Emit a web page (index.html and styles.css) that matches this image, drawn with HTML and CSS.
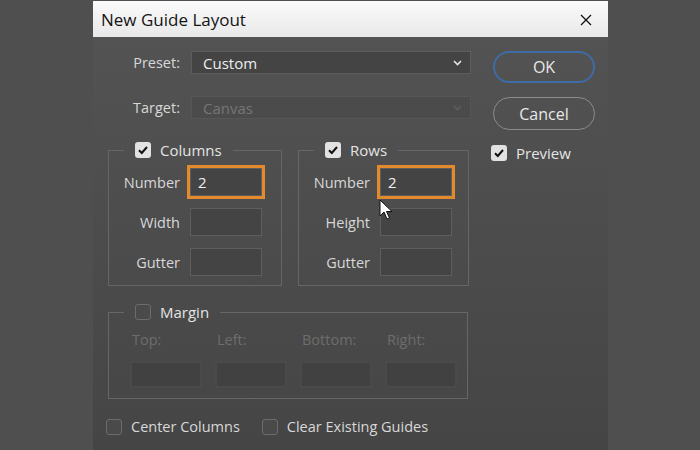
FILE: index.html
```html
<!DOCTYPE html>
<html lang="en">
<head>
    <meta charset="UTF-8">
    <meta name="viewport" content="width=device-width, initial-scale=1.0">
    <title>New Guide Layout</title>
    <link rel="stylesheet" href="styles.css">
</head>
<body>
    <div class="dialog">
        <div class="titlebar">
            <span class="title">New Guide Layout</span>
            <svg class="close" width="12" height="12" viewBox="0 0 12 12">
                <path d="M1 1 L11 11 M11 1 L1 11" stroke="#111" stroke-width="1.3" fill="none"/>
            </svg>
        </div>

        <div class="content">
            <div class="main">
                <div class="field-row">
                    <span class="field-label">Preset:</span>
                    <div class="select">
                        <span>Custom</span>
                        <svg class="chevron" width="9" height="6" viewBox="0 0 9 6">
                            <path d="M1 1 L4.5 4.5 L8 1" stroke="#e6e6e6" stroke-width="1.6" fill="none"/>
                        </svg>
                    </div>
                </div>
                <div class="field-row target">
                    <span class="field-label">Target:</span>
                    <div class="select disabled">
                        <span>Canvas</span>
                        <svg class="chevron" width="9" height="6" viewBox="0 0 9 6">
                            <path d="M1 1 L4.5 4.5 L8 1" stroke="#5e5e5e" stroke-width="1.6" fill="none"/>
                        </svg>
                    </div>
                </div>

                <div class="groups">
                    <fieldset class="group cols">
                        <legend><span class="check on"><svg width="16" height="16" viewBox="0 0 16 16"><path d="M4 8.2 L6.8 11 L12 5" stroke="#111" stroke-width="2" fill="none"/></svg></span>Columns</legend>
                        <div class="grid">
                            <span class="grid-label">Number</span><div class="input focus">2</div>
                            <span class="grid-label">Width</span><div class="input"></div>
                            <span class="grid-label">Gutter</span><div class="input"></div>
                        </div>
                    </fieldset>
                    <fieldset class="group rows">
                        <legend><span class="check on"><svg width="16" height="16" viewBox="0 0 16 16"><path d="M4 8.2 L6.8 11 L12 5" stroke="#111" stroke-width="2" fill="none"/></svg></span>Rows</legend>
                        <div class="grid">
                            <span class="grid-label">Number</span><div class="input focus">2</div>
                            <span class="grid-label">Height</span><div class="input"></div>
                            <span class="grid-label">Gutter</span><div class="input"></div>
                        </div>
                    </fieldset>
                </div>

                <fieldset class="group margin">
                    <legend><span class="check"></span>Margin</legend>
                    <div class="margin-grid">
                        <div class="margin-cell"><span class="dim-label">Top:</span><div class="input off"></div></div>
                        <div class="margin-cell"><span class="dim-label">Left:</span><div class="input off"></div></div>
                        <div class="margin-cell"><span class="dim-label">Bottom:</span><div class="input off"></div></div>
                        <div class="margin-cell"><span class="dim-label">Right:</span><div class="input off"></div></div>
                    </div>
                </fieldset>

                <div class="options">
                    <label class="option"><span class="check"></span>Center Columns</label>
                    <label class="option"><span class="check"></span>Clear Existing Guides</label>
                </div>
            </div>

            <div class="side">
                <button class="btn ok">OK</button>
                <button class="btn">Cancel</button>
                <label class="option preview"><span class="check on"><svg width="16" height="16" viewBox="0 0 16 16"><path d="M4 8.2 L6.8 11 L12 5" stroke="#111" stroke-width="2" fill="none"/></svg></span>Preview</label>
            </div>
        </div>

        <!-- mouse pointer over the rows field -->
        <svg class="pointer" width="14" height="22" viewBox="0 0 14 22">
            <path d="M1 1 L1 17 L5 13 L8 20 L10.5 19 L7.5 12.5 L13 12.5 Z" fill="#fff" stroke="#111" stroke-width="1"/>
        </svg>
    </div>
</body>
</html>
```

FILE: styles.css
```css
body {
    margin: 0;
    background: #4f4f4f;
    font-family: "Open Sans", "Noto Sans", sans-serif;
    font-size: 14.5px;
    color: #d8d8d8;
    overflow: hidden;
}

.dialog {
    position: relative;
    width: 515px;
    height: 450px;
    margin-left: 93px;
    background: linear-gradient(#545454, #454545);
}

/* Title bar */
.titlebar {
    height: 36px;
    margin-top: 1px;
    display: flex;
    align-items: center;
    justify-content: space-between;
    padding: 0 16px 0 8px;
    background: linear-gradient(#fbfbfb, #e8e8e8);
}

.title {
    font-size: 17px;
    color: #141414;
}

.close {
    margin-top: 1px;
}

/* Body */
.content {
    display: flex;
    gap: 20px;
    padding: 14px 0 0 15px;
}

.main {
    width: 363px;
}

.field-row {
    display: flex;
    align-items: center;
    gap: 11px;
}

.field-row.target {
    margin-top: 22px;
}

.field-label {
    width: 72px;
    text-align: right;
}

.select {
    flex: 1;
    height: 21px;
    display: flex;
    align-items: center;
    justify-content: space-between;
    padding: 0 8px 0 11px;
    background: #444;
    border: 1px solid #5c5c5c;
    color: #eee;
    font-size: 15px;
}

.select.disabled {
    background: #4b4b4b;
    border-color: #565656;
    color: #767676;
}

/* Column / row groups */
.groups {
    display: flex;
    gap: 16px;
    margin-top: 21px;
}

.group {
    margin: 0;
    padding: 8px 0 9px 0;
    border: 1px solid #666;
}

.group.cols {
    width: 172px;
}

.group.rows {
    width: 169px;
}

.group legend {
    display: flex;
    align-items: center;
    gap: 9px;
    margin-left: 15px;
    padding: 0 11px;
    color: #e4e4e4;
    font-size: 15px;
}

.grid {
    display: grid;
    grid-template-columns: 64px 72px;
    column-gap: 10px;
    row-gap: 12px;
    align-items: center;
    padding-left: 7px;
}

.grid-label {
    text-align: right;
}

.input {
    height: 26px;
    box-sizing: border-box;
    padding-left: 7px;
    line-height: 26px;
    background: #444;
    border: 1px solid #5e5e5e;
    color: #f0f0f0;
    font-size: 15px;
}

.input.focus {
    outline: 3px solid #e38a2d;
}

.grid .input {
    height: 28px;
    line-height: 26px;
}

/* Margin group */
.group.margin {
    width: 358px;
    margin-top: 16px;
    padding: 8px 0 10px 0;
}

.margin-grid {
    display: grid;
    grid-template-columns: repeat(4, 72px);
    column-gap: 13px;
    padding-left: 21px;
}

.margin-cell {
    display: flex;
    flex-direction: column;
    gap: 12px;
}

.dim-label {
    padding-left: 2px;
    color: #6d6d6d;
}

.input.off {
    height: 27px;
    background: #414141;
    border: 2px solid #4a4a4a;
}

/* Checkboxes */
.check {
    width: 16px;
    height: 16px;
    box-sizing: border-box;
    border-radius: 3px;
    border: 1px solid #6c6c6c;
    background: #4a4a4a;
}

.check.on {
    border: none;
    background: #e2e2e2;
}

.check svg {
    display: block;
}

.options {
    display: flex;
    gap: 22px;
    margin-top: 18px;
    margin-left: -2px;
}

.option {
    display: flex;
    align-items: center;
    gap: 9px;
}

/* Right column */
.side {
    display: flex;
    flex-direction: column;
    align-items: flex-start;
    padding-left: 2px;
}

.btn {
    width: 102px;
    height: 33px;
    border-radius: 17px;
    border: 1px solid #8c8c8c;
    background: transparent;
    color: #e8e8e8;
    font-family: inherit;
    font-size: 16px;
    margin-bottom: 14px;
}

.btn.ok {
    height: 32px;
    border: 2px solid #3e6ca6;
}

.option.preview {
    margin-left: -2px;
    margin-top: -1px;
    color: #e4e4e4;
    font-size: 15px;
}

.pointer {
    position: absolute;
    left: 286px;
    top: 198px;
}
```
